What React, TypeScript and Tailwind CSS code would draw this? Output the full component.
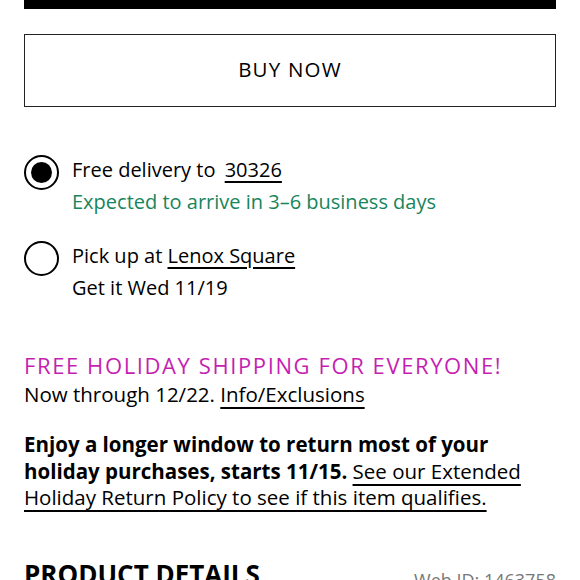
export default function App() {
  return (
    <div className="h-[580px] w-[580px] overflow-hidden bg-white px-[24px] text-black" style={{ fontFamily: "'Open Sans', 'Noto Sans', sans-serif" }}>
      <div className="h-[9px] bg-black" />
      <button className="mt-[25px] flex h-[73px] w-full items-center justify-center border-[1.5px] border-[#222] pb-[3px] text-[20.5px] tracking-[1.2px]">
        BUY NOW
      </button>

      <div className="mt-[48px] flex gap-[13px]">
        <span className="flex h-[35px] w-[35px] shrink-0 items-center justify-center rounded-full border-[2px] border-black">
          <span className="h-[21px] w-[21px] rounded-full bg-black" />
        </span>
        <div className="-mt-[1px] text-[20px] leading-[32px]">
          <div>
            Free delivery to <span className="ml-[4px] underline underline-offset-[4px] decoration-[1.5px]">30326</span>
          </div>
          <div className="text-[#17855c]">Expected to arrive in 3–6 business days</div>
        </div>
      </div>

      <div className="mt-[23px] flex gap-[13px]">
        <span className="h-[35px] w-[35px] shrink-0 rounded-full border-[2px] border-black" />
        <div className="-mt-[1px] text-[20px] leading-[32px]">
          <div>
            Pick up at <span className="underline underline-offset-[4px] decoration-[1.5px]">Lenox Square</span>
          </div>
          <div>Get it Wed 11/19</div>
        </div>
      </div>

      <div className="mt-[47px] text-[20.5px] leading-[29px]">
        <div className="text-[22px] tracking-[1.6px] text-[#c51fb1]">FREE HOLIDAY SHIPPING FOR EVERYONE!</div>
        <div>
          Now through 12/22. <span className="underline underline-offset-[5px] decoration-[1.5px]">Info/Exclusions</span>
        </div>
      </div>

      <p className="mt-[22px] text-[20.5px] leading-[26.5px]">
        <span className="font-bold">Enjoy a longer window to return most of your holiday purchases, starts 11/15.</span>{" "}
        <span className="underline underline-offset-[5px] decoration-[1.5px]">See our Extended Holiday Return Policy to see if this item qualifies.</span>
      </p>

      <div className="mt-[45px] flex items-baseline justify-between">
        <h2 className="text-[26px] font-bold leading-[36px]">PRODUCT DETAILS</h2>
        <span className="translate-y-[3px] text-[18px] text-[#777]">Web ID: 1463758</span>
      </div>
    </div>
  );
}
